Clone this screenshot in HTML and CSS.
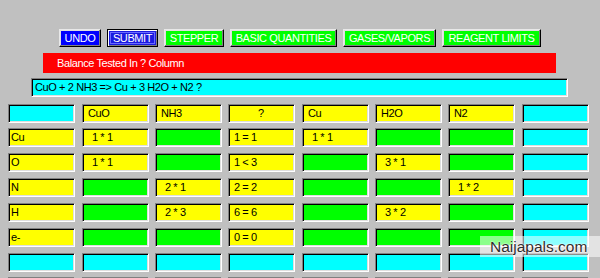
FILE: index.html
```html
<!DOCTYPE html>
<html>
<head>
<meta charset="utf-8">
<link rel="stylesheet" href="styles.css">
</head>
<body>
<div class="app">
  <div class="toolbar">
    <button class="btn btn-blue w-undo">UNDO</button>
    <button class="btn btn-blue btn-default w-submit">SUBMIT</button>
    <button class="btn btn-green w-stepper">STEPPER</button>
    <button class="btn btn-green w-basic">BASIC QUANTITIES</button>
    <button class="btn btn-green w-gases">GASES/VAPORS</button>
    <button class="btn btn-green w-reagent">REAGENT LIMITS</button>
  </div>
  <div class="status">Balance Tested In ? Column</div>
  <div class="equation sunken">CuO + 2 NH3 =&gt; Cu + 3 H2O + N2 ?</div>
  <div class="grid">
    <div class="cell sunken cyan"></div>
    <div class="cell sunken yellow">CuO</div>
    <div class="cell sunken yellow">NH3</div>
    <div class="cell sunken yellow q">?</div>
    <div class="cell sunken yellow">Cu</div>
    <div class="cell sunken yellow">H2O</div>
    <div class="cell sunken yellow">N2</div>
    <div class="cell sunken cyan"></div>

    <div class="cell sunken yellow label">Cu</div>
    <div class="cell sunken yellow pad">1 * 1</div>
    <div class="cell sunken green"></div>
    <div class="cell sunken yellow">1 = 1</div>
    <div class="cell sunken yellow pad">1 * 1</div>
    <div class="cell sunken green"></div>
    <div class="cell sunken green"></div>
    <div class="cell sunken cyan"></div>

    <div class="cell sunken yellow label">O</div>
    <div class="cell sunken yellow pad">1 * 1</div>
    <div class="cell sunken green"></div>
    <div class="cell sunken yellow">1 &lt; 3</div>
    <div class="cell sunken green"></div>
    <div class="cell sunken yellow pad">3 * 1</div>
    <div class="cell sunken green"></div>
    <div class="cell sunken cyan"></div>

    <div class="cell sunken yellow label">N</div>
    <div class="cell sunken green"></div>
    <div class="cell sunken yellow pad">2 * 1</div>
    <div class="cell sunken yellow">2 = 2</div>
    <div class="cell sunken green"></div>
    <div class="cell sunken green"></div>
    <div class="cell sunken yellow pad">1 * 2</div>
    <div class="cell sunken cyan"></div>

    <div class="cell sunken yellow label">H</div>
    <div class="cell sunken green"></div>
    <div class="cell sunken yellow pad">2 * 3</div>
    <div class="cell sunken yellow">6 = 6</div>
    <div class="cell sunken green"></div>
    <div class="cell sunken yellow pad">3 * 2</div>
    <div class="cell sunken green"></div>
    <div class="cell sunken cyan"></div>

    <div class="cell sunken yellow label">e-</div>
    <div class="cell sunken green"></div>
    <div class="cell sunken green"></div>
    <div class="cell sunken yellow">0 = 0</div>
    <div class="cell sunken green"></div>
    <div class="cell sunken green"></div>
    <div class="cell sunken green"></div>
    <div class="cell sunken cyan"></div>

    <div class="cell sunken cyan"></div>
    <div class="cell sunken cyan"></div>
    <div class="cell sunken cyan"></div>
    <div class="cell sunken cyan"></div>
    <div class="cell sunken cyan"></div>
    <div class="cell sunken cyan"></div>
    <div class="cell sunken cyan"></div>
    <div class="cell sunken cyan"></div>

    <div class="cell sunken cyan"></div>
    <div class="cell sunken cyan"></div>
    <div class="cell sunken cyan"></div>
    <div class="cell sunken cyan"></div>
    <div class="cell sunken cyan"></div>
    <div class="cell sunken cyan"></div>
    <div class="cell sunken cyan"></div>
    <div class="cell sunken cyan"></div>
  </div>
  <div class="watermark">Naijapals.com</div>
</div>
</body>
</html>
```
FILE: styles.css
```css
html, body {
  margin: 0;
  padding: 0;
}
body {
  background: #c0c0c0;
  width: 600px;
  height: 278px;
  overflow: hidden;
  font-family: "Liberation Sans", Arial, sans-serif;
  font-size: 11px;
  letter-spacing: -0.4px;
}
.app {
  position: relative;
  width: 600px;
  height: 278px;
  display: flex;
  flex-direction: column;
  padding-top: 29px;
  box-sizing: border-box;
}
.toolbar {
  display: flex;
  gap: 6px;
  padding-left: 59px;
  height: 18px;
}
.btn {
  font-family: "Liberation Sans", Arial, sans-serif;
  font-size: 11px;
  letter-spacing: -0.4px;
  color: #fff;
  height: 18px;
  padding: 0;
  margin: 0;
  box-sizing: border-box;
  border: 1px solid;
  border-color: #e8e8e8 #000 #000 #e8e8e8;
  box-shadow: inset -1px -1px 0 #808080, inset 1px 1px 0 #dfdfdf;
  line-height: 14px;
}
.btn-blue { background: #0000ff; }
.btn-green { background: #00ff00; }
.btn-default {
  border-color: #000;
  box-shadow: inset 1px 1px 0 #fff, inset -1px -1px 0 #808080;
  outline: 1px solid #6a6aff;
  outline-offset: -4px;
  background: #1a1ae0;
}
.w-undo { width: 42px; }
.w-submit { width: 51px; }
.w-stepper { width: 60px; }
.w-basic { width: 107px; }
.w-gases { width: 93px; }
.w-reagent { width: 99px; }

.status {
  margin-top: 6px;
  margin-left: 43px;
  width: 513px;
  height: 20px;
  box-sizing: border-box;
  background: #ff0000;
  color: #fff;
  padding-left: 14px;
  line-height: 20px;
}
.sunken {
  box-sizing: border-box;
  border: 1px solid;
  border-color: #808080 #fff #fff #808080;
  box-shadow: inset 1px 1px 0 #000, inset -1px -1px 0 #dfdfdf;
}
.equation {
  margin-top: 5px;
  margin-left: 31px;
  width: 537px;
  height: 19px;
  background: #00ffff;
  color: #000;
  padding-left: 3px;
  line-height: 17px;
}
.grid {
  margin-top: 7px;
  margin-left: 8px;
  display: grid;
  grid-template-columns: 74px 73px 73px 74px 73px 73px 74px 67px;
  grid-template-rows: 24px 25px 25px 25px 25px 25px 24px 19px;
}
.cell {
  width: 67px;
  height: 19px;
  color: #000;
  padding-left: 5px;
  line-height: 17px;
  white-space: pre;
}
.cell.label { padding-left: 2px; }
.cell.pad { padding-left: 9px; }
.cell.q { padding-left: 29px; }
.yellow { background: #ffff00; }
.green { background: #00ff00; }
.cyan { background: #00ffff; }

.watermark {
  position: absolute;
  left: 480px;
  top: 236px;
  width: 120px;
  height: 21px;
  background: rgba(255, 255, 255, 0.55);
  color: #2e2e2e;
  font-size: 15.5px;
  letter-spacing: 0;
  line-height: 21px;
  padding-left: 10px;
  box-sizing: border-box;
  text-shadow: 0 0 2px #fff, 0 0 1px #fff;
}
```
